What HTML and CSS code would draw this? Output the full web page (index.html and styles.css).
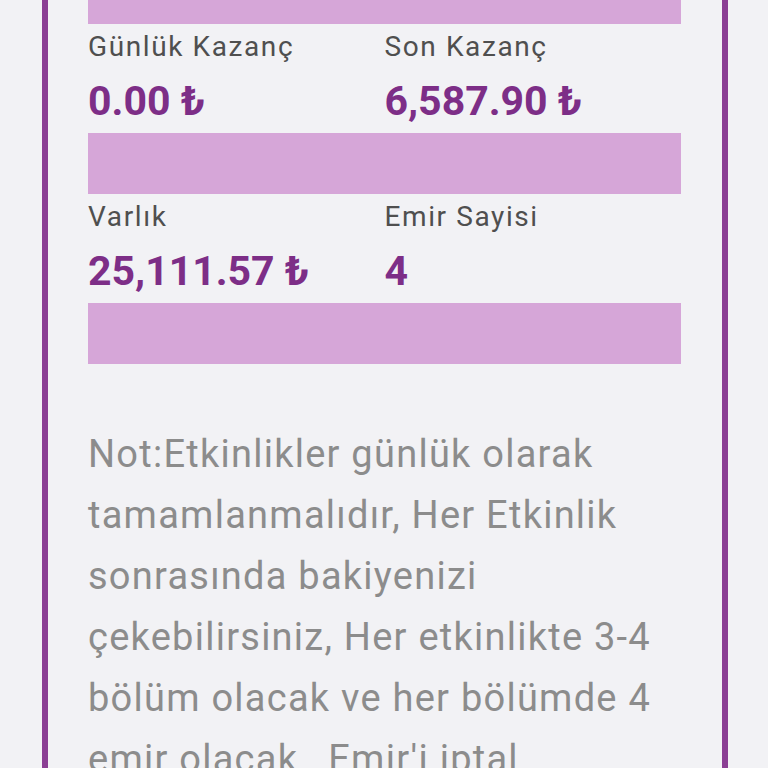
FILE: index.html
```html
<!DOCTYPE html>
<html lang="tr">
<head>
<meta charset="utf-8">
<title>Etkinlik</title>
<link rel="stylesheet" href="styles.css">
</head>
<body>
<div class="panel">
  <div class="bar"></div>
  <div class="stats">
    <div class="stat">
      <div class="label">Günlük Kazanç</div>
      <div class="value">0.00 ₺</div>
    </div>
    <div class="stat">
      <div class="label">Son Kazanç</div>
      <div class="value">6,587.90 ₺</div>
    </div>
  </div>
  <div class="bar"></div>
  <div class="stats">
    <div class="stat">
      <div class="label">Varlık</div>
      <div class="value">25,111.57 ₺</div>
    </div>
    <div class="stat">
      <div class="label">Emir Sayisi</div>
      <div class="value">4</div>
    </div>
  </div>
  <div class="bar"></div>
  <p class="note">Not:Etkinlikler günlük olarak tamamlanmalıdır, Her Etkinlik sonrasında bakiyenizi çekebilirsiniz, Her etkinlikte 3-4 bölüm olacak ve her bölümde 4 emir olacak , Emir'i iptal edemezsiniz.</p>
</div>
</body>
</html>
```
FILE: styles.css
```css
html, body {
  margin: 0;
  padding: 0;
  background: #f2f2f5;
  font-family: Roboto, "Noto Sans", sans-serif;
  overflow: hidden;
}
.panel {
  margin: -37px 40px 0 42px;
  border-left: 6px solid #8b3f94;
  border-right: 6px solid #8b3f94;
  padding: 0 41px 40px 40px;
}
.bar {
  height: 61px;
  background: #d6a6d8;
}
.stats {
  display: grid;
  grid-template-columns: 1fr 1fr;
  padding: 7px 0 8px 0;
}
.label {
  font-size: 28px;
  line-height: 32px;
  letter-spacing: 1.6px;
  color: #4f4f4f;
}
.value {
  margin-top: 14px;
  font-size: 41px;
  line-height: 48px;
  font-weight: 700;
  color: #7d2e87;
}
.note {
  margin: 60px 0 0 0;
  font-size: 38px;
  line-height: 61px;
  letter-spacing: 1.25px;
  color: #8c8c8c;
}
```
